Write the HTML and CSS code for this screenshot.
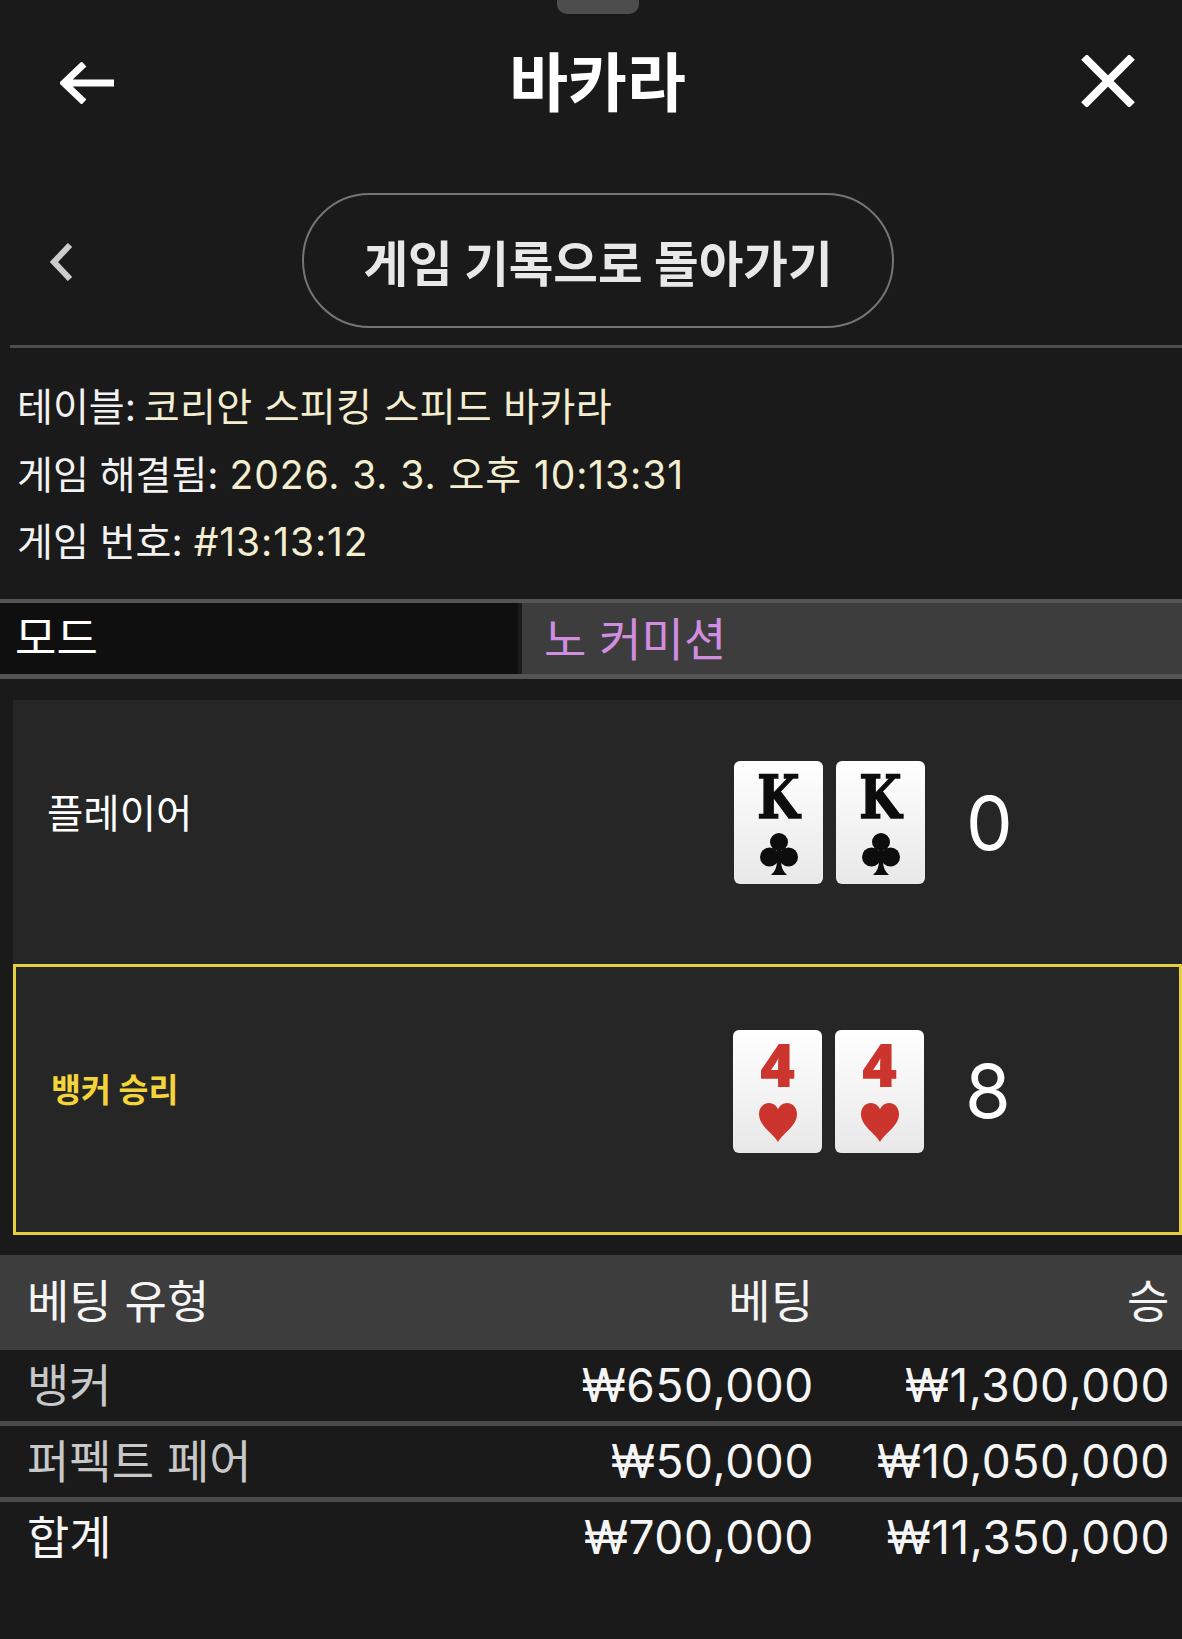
FILE: index.html
```html
<!DOCTYPE html>
<html lang="ko">
<head>
    <title>바카라</title>
    <link rel="stylesheet" href="styles.css">
</head>
<body>

<div class="handle"></div>

<header class="topbar">
    <svg class="icon-back" width="54" height="42" viewBox="0 0 54 42">
        <path d="M54 21H5M24 2L4 21l20 19" fill="none" stroke="#fff" stroke-width="7"/>
    </svg>
    <h1>바카라</h1>
    <svg class="icon-close" width="54" height="52" viewBox="0 0 54 52">
        <path d="M3 2l48 48M51 2L3 50" fill="none" stroke="#fff" stroke-width="8"/>
    </svg>
</header>

<div class="backrow">
    <svg class="icon-chevron" width="23" height="38" viewBox="0 0 23 38">
        <path d="M20 2L4 19l16 17" fill="none" stroke="#ccc" stroke-width="6"/>
    </svg>
    <button type="button" class="back-button">게임 기록으로 돌아가기</button>
</div>

<div class="info">
    <div>테이블: <span class="value value-name">코리안 스피킹 스피드 바카라</span></div>
    <div>게임 해결됨: <span class="value value-num">2026. 3. 3. 오후 10:13:31</span></div>
    <div>게임 번호: <span class="value value-num">#13:13:12</span></div>
</div>

<div class="mode">
    <div class="mode-name">모드</div>
    <div class="mode-value">노 커미션</div>
</div>

<section class="hands">
    <div class="hand">
        <div class="hand-label">플레이어</div>
        <div class="cards">
            <div class="card">
                <span class="rank rank-k">K</span>
                <svg class="suit" width="38" height="42" viewBox="0 0 38 42" fill="#0d0d0d">
                    <circle cx="19" cy="9" r="9"/>
                    <circle cx="9.500" cy="24" r="9.500"/>
                    <circle cx="28.500" cy="24" r="9.500"/>
                    <path d="M17 14h4v14q0 9 6 14H11q6-5 6-14z"/>
                </svg>
            </div>
            <div class="card">
                <span class="rank rank-k">K</span>
                <svg class="suit" width="38" height="42" viewBox="0 0 38 42" fill="#0d0d0d">
                    <circle cx="19" cy="9" r="9"/>
                    <circle cx="9.500" cy="24" r="9.500"/>
                    <circle cx="28.500" cy="24" r="9.500"/>
                    <path d="M17 14h4v14q0 9 6 14H11q6-5 6-14z"/>
                </svg>
            </div>
        </div>
        <div class="score">0</div>
    </div>
    <div class="hand hand-won">
        <div class="hand-label">뱅커 승리</div>
        <div class="cards">
            <div class="card">
                <span class="rank rank-4">4</span>
                <svg class="suit" width="38" height="39" viewBox="0 0 38 39">
                    <path d="M19 39C14 30 0 23 0 11C0 4.500 4.500 0 10 0c4 0 7 2 9 6c2-4 5-6 9-6c5.500 0 10 4.500 10 11c0 12-14 19-19 28z" fill="#cc352e"/>
                </svg>
            </div>
            <div class="card">
                <span class="rank rank-4">4</span>
                <svg class="suit" width="38" height="39" viewBox="0 0 38 39">
                    <path d="M19 39C14 30 0 23 0 11C0 4.500 4.500 0 10 0c4 0 7 2 9 6c2-4 5-6 9-6c5.500 0 10 4.500 10 11c0 12-14 19-19 28z" fill="#cc352e"/>
                </svg>
            </div>
        </div>
        <div class="score">8</div>
    </div>
</section>

<section class="bets">
    <div class="bets-row bets-head">
        <div>베팅 유형</div>
        <div class="num">베팅</div>
        <div class="num">승</div>
    </div>
    <div class="bets-row">
        <div class="bet-name">뱅커</div>
        <div class="num">₩650,000</div>
        <div class="num">₩1,300,000</div>
    </div>
    <div class="bets-row">
        <div class="bet-name">퍼펙트 페어</div>
        <div class="num">₩50,000</div>
        <div class="num">₩10,050,000</div>
    </div>
    <div class="bets-row bets-total">
        <div>합계</div>
        <div class="num">₩700,000</div>
        <div class="num">₩11,350,000</div>
    </div>
</section>

</body>
</html>
```

FILE: styles.css
```css
body {
  margin: 0;
  width: 1182px;
  height: 1639px;
  overflow: hidden;
  background-color: #1a1a1a;
  color: #fff;
  font-family: "Inter", "Noto Sans CJK KR", sans-serif;
}

.handle {
  width: 82px;
  height: 14px;
  margin-left: 557px;
  background-color: #4d4d4d;
  border-radius: 0 0 10px 10px;
}

.topbar {
  display: grid;
  grid-template-columns: 1fr auto 1fr;
  align-items: center;
  height: 132px;
  padding: 3px 47px 0 60px;
}
h1 {
  margin: 0;
  font-size: 64px;
  font-weight: 700;
  line-height: 132px;
}
.icon-close {
  justify-self: end;
  margin-bottom: 4px;
}

.backrow {
  position: relative;
  display: flex;
  justify-content: center;
  align-items: center;
  height: 135px;
  margin-top: 44px;
  margin-bottom: 17px;
  padding-left: 14px;
}
.icon-chevron {
  position: absolute;
  left: 50px;
  top: 50px;
}
.back-button {
  width: 592px;
  height: 135px;
  border: 2px solid #757575;
  border-radius: 68px;
  background: none;
  color: #e8e8e8;
  font-family: inherit;
  font-size: 48.5px;
  font-weight: 700;
}

.info {
  margin-left: 10px;
  padding: 25px 0 23px 7px;
  border-top: 3px solid #4d4d4d;
  font-size: 39px;
  line-height: 67.5px;
  color: #f2f2f2;
}
.info .value {
  color: #f3eed0;
}
.info .value-name {
  margin-left: -3px;
  letter-spacing: 0.3px;
}
.info .value-num {
  letter-spacing: 0.9px;
}

.mode {
  display: flex;
  border-top: 4px solid #555;
  border-bottom: 5px solid #555;
  height: 71px;
}
.mode-name {
  width: 518px;
  padding-left: 15px;
  box-sizing: border-box;
  background-color: #0f0f0f;
  font-size: 45px;
  line-height: 72px;
}
.mode-value {
  flex: 1;
  margin-left: 4px;
  padding-left: 22px;
  background-color: #3d3d3d;
  color: #d18ee0;
  font-size: 46px;
  line-height: 72px;
}

.hands {
  margin: 21px 0 20px 13px;
  background-color: #262626;
}
.hand {
  display: flex;
  align-items: center;
  height: 264px;
  padding-bottom: 18px;
  box-sizing: border-box;
}
.hand-won {
  height: 271px;
  padding-bottom: 16px;
  border: 3px solid #e6cf3c;
}
.hand-label {
  width: 687px;
  padding-left: 34px;
  margin-bottom: 24px;
  font-size: 39.5px;
}
.hand-won .hand-label {
  width: 682px;
  padding-left: 35px;
  margin-bottom: 8px;
  color: #f3d43a;
  font-size: 32.5px;
  font-weight: 700;
}

.cards {
  display: flex;
  gap: 13px;
}
.card {
  display: flex;
  flex-direction: column;
  align-items: center;
  width: 89px;
  height: 123px;
  border-radius: 6px;
  background: linear-gradient(#fff, #e8e8e8);
}
.rank {
  height: 72px;
  line-height: 72px;
}
.rank-k {
  font-family: "DejaVu Serif Condensed", "DejaVu Serif", serif;
  font-size: 60px;
  font-weight: 700;
  color: #0d0d0d;
  -webkit-text-stroke: 1.5px #0d0d0d;
  transform: scaleX(0.9);
}
.rank-4 {
  height: 73px;
  line-height: 69px;
  font-family: "Open Sans", sans-serif;
  font-size: 60px;
  font-weight: 800;
  color: #cc352e;
}

.score {
  margin-left: 41px;
  font-size: 74px;
  font-weight: 400;
}

.bets-row {
  display: grid;
  grid-template-columns: 1fr 300px 356px;
  height: 71px;
  padding: 0 12px 0 27px;
  border-bottom: 5px solid #4a4a4a;
  font-size: 46px;
  line-height: 70px;
  color: #f5f5f5;
}
.bets-head {
  height: 95px;
  line-height: 92px;
  background-color: #3d3d3d;
  border-bottom: none;
}
.bets-total {
  border-bottom: none;
}
.bet-name {
  color: #c8c8c8;
}
.num {
  text-align: right;
  letter-spacing: 0.6px;
}
```
